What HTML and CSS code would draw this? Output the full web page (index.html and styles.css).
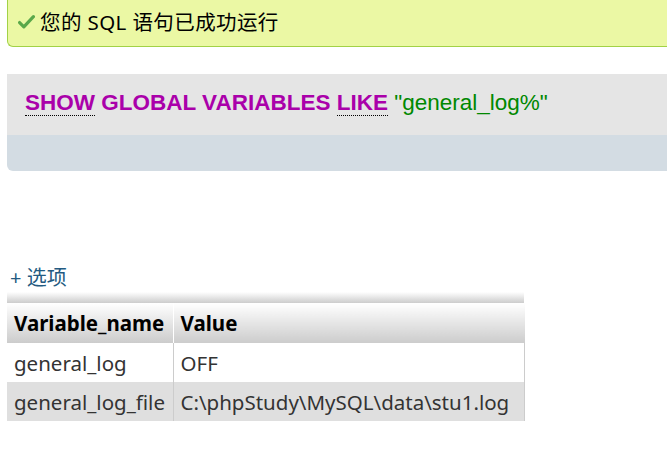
FILE: index.html
```html
<!DOCTYPE html>
<html>
<head>
<meta charset="utf-8">
<link rel="stylesheet" href="styles.css">
</head>
<body>
<div class="success">
  <svg class="check" width="17" height="15" viewBox="0 0 16 14"><path d="M1.5 8 L5.5 12 L14.5 2.5" fill="none" stroke="#5aa84a" stroke-width="3" stroke-linecap="round" stroke-linejoin="round"/></svg>
  <span>您的 SQL 语句已成功运行</span>
</div>
<div class="sqlbox">
  <div class="sql"><span class="kw dotted">SHOW</span> <span class="kw">GLOBAL VARIABLES</span> <span class="kw dotted">LIKE</span> <span class="str">"general_log%"</span></div>
  <div class="tools"></div>
</div>
<div class="options">+ 选项</div>
<div class="strip"></div>
<table class="data">
  <thead>
    <tr><th class="c1">Variable_name</th><th>Value</th></tr>
  </thead>
  <tbody>
    <tr class="odd"><td class="c1">general_log</td><td>OFF</td></tr>
    <tr class="even"><td class="c1">general_log_file</td><td>C:\phpStudy\MySQL\data\stu1.log</td></tr>
  </tbody>
</table>
</body>
</html>
```
FILE: styles.css
```css
html, body { margin: 0; padding: 0; background: #fff; }
body {
  font-family: "Noto Sans", "Noto Sans CJK SC", sans-serif;
  color: #000;
  overflow: hidden;
  width: 667px;
  height: 455px;
}
.success {
  margin: -8px 0 0 7px;
  height: 55px;
  padding: 2px 0 0 10px;
  box-sizing: border-box;
  background: #ebf8a4;
  border: 1px solid #a2d246;
  border-right: none;
  border-radius: 0 0 0 6px;
  display: flex;
  align-items: center;
  gap: 5px;
  font-size: 20.5px;
  letter-spacing: 0.4px;
}
.check { flex: none; margin-top: 2px; }
.sqlbox {
  margin: 27px 0 0 7px;
  border-radius: 0 0 0 6px;
  overflow: hidden;
  background: #d3dce3;
}
.sql {
  background: #e5e5e5;
  height: 61px;
  padding: 16px 0 0 18px;
  box-sizing: border-box;
  font-family: "Liberation Sans", Arial, sans-serif;
  font-size: 22.5px;
  line-height: 26px;
  white-space: pre;
}
.kw { color: #a0a; font-weight: bold; }
.dotted { border-bottom: 1px dotted #000; }
.str { color: #080; }
.tools { height: 36px; }
.options {
  margin: 94px 0 0 10px;
  color: #235a81;
  font-size: 20px;
  line-height: 26px;
}
.strip {
  margin: 1px 0 0 7px;
  width: 517px;
  height: 11px;
  background: linear-gradient(#ffffff, #cccccc);
}
.data {
  margin-left: 7px;
  width: 518px;
  border-collapse: collapse;
  font-size: 20.5px;
}
.data th, .data td {
  text-align: left;
  padding: 0 7px;
  height: 39px;
  box-sizing: border-box;
  white-space: nowrap;
}
.data th {
  height: 40px;
  font-weight: bold;
  background: linear-gradient(#ffffff, #cccccc);
}
.data th.c1 { border-right: 1px solid #fff; width: 166px; }
.data td.c1 { border-right: 1px solid #ccc; }
.data td + td { border-right: 1px solid #ccc; }
.data td { color: #333; }
.data tr.odd td { background: #fff; }
.data tr.even td { background: #dfdfdf; }
```
